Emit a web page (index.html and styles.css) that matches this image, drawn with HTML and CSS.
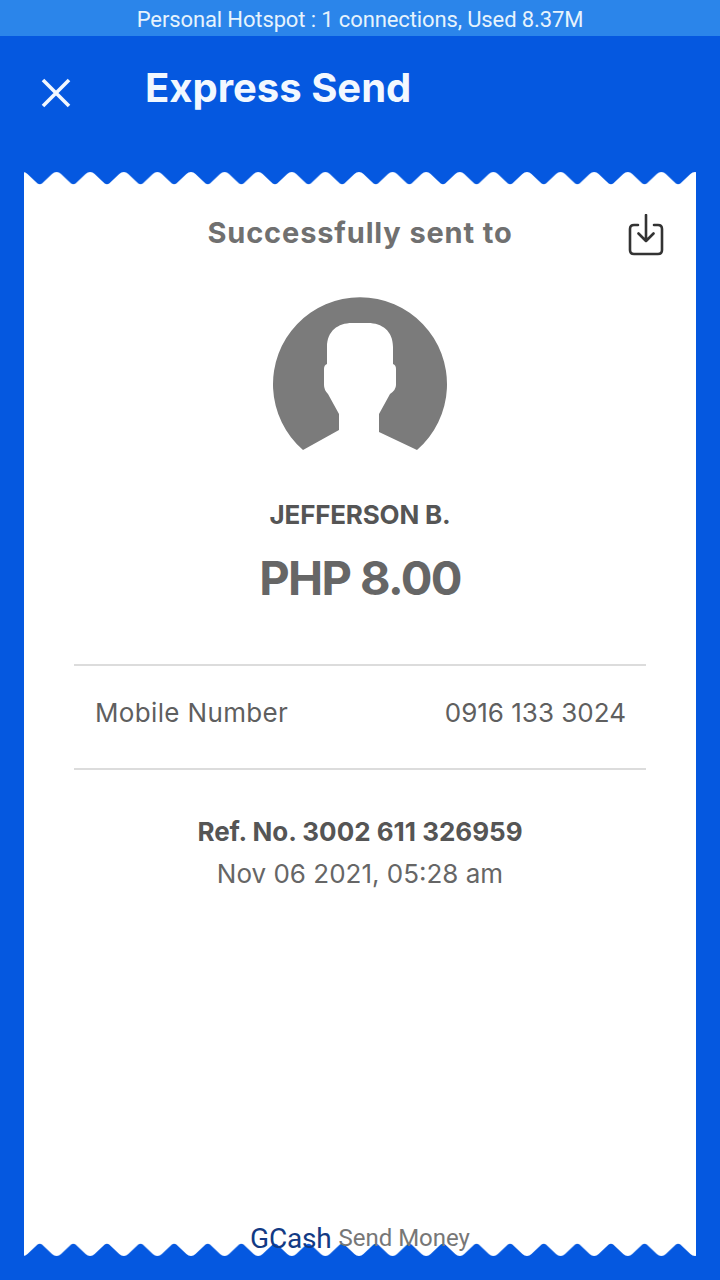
FILE: index.html
```html
<!DOCTYPE html>
<html lang="en">
<head>
  <meta charset="UTF-8">
  <meta name="viewport" content="width=device-width, initial-scale=1.0">
  <title>Express Send</title>
  <link rel="stylesheet" href="styles.css">
</head>
<body>

<div class="hotspot">Personal Hotspot : 1 connections, Used 8.37M</div>

<header class="topbar">
  <svg class="close-icon" width="30" height="30" viewBox="0 0 30 30">
    <path d="M2 2 L28 28 M28 2 L2 28"/>
  </svg>
  <h1 class="title">Express Send</h1>
</header>

<main class="receipt">
  <svg class="edge" width="672" height="13">
    <defs>
      <pattern id="waveTop" patternUnits="userSpaceOnUse" x="-1" width="33.6" height="13">
        <path d="M0 0 Q2.5 0 4.5 2 L14.5 11.5 Q16.8 13 19 11.5 L29 2 Q31 0 33.6 0 V13 H0 Z" fill="#fff"/>
      </pattern>
    </defs>
    <rect width="672" height="13" fill="url(#waveTop)"/>
  </svg>

  <div class="receipt-body">
    <div class="receipt-head">
      <h2 class="sent-to">Successfully sent to</h2>
      <svg class="save-icon" width="36" height="42" viewBox="0 0 36 42">
        <path d="M10 11 H6 Q2 11 2 15 V36 Q2 40 6 40 H30 Q34 40 34 36 V15 Q34 11 30 11 H26"/>
        <path d="M18 1 V27 M10.5 19.5 L18 27 L25.5 19.5"/>
      </svg>
    </div>

    <svg class="avatar" width="176" height="160" viewBox="0 0 176 160">
      <path d="M31 153 A87 87 0 1 1 145 153 L107 135 V117 L118 97 Q124 93 124 88 V72 Q124 68 121 67 V50 C121 34 110 26 96 26 H80 C66 26 55 34 55 50 V67 Q52 68 52 72 V88 Q52 93 56 97 L67 117 V133 Z"/>
    </svg>

    <p class="name">JEFFERSON B.</p>
    <p class="amount">PHP 8.00</p>

    <div class="detail-row">
      <span class="detail-label">Mobile Number</span>
      <span class="detail-value">0916 133 3024</span>
    </div>

    <p class="ref">Ref. No. 3002 611 326959</p>
    <p class="date">Nov 06 2021, 05:28 am</p>
  </div>

  <svg class="edge" width="672" height="13">
    <defs>
      <pattern id="waveBottom" patternUnits="userSpaceOnUse" x="-1" width="33.6" height="13">
        <path d="M0 0 H33.6 V13 Q31 13 29 11 L19 1.5 Q16.8 0 14.5 1.5 L4.5 11 Q2.5 13 0 13 Z" fill="#fff"/>
      </pattern>
    </defs>
    <rect width="672" height="13" fill="url(#waveBottom)"/>
  </svg>

  <div class="brand"><span class="brand-name">GCash</span> <span class="brand-sub">Send Money</span></div>
</main>

</body>
</html>
```

FILE: styles.css
```css
* { box-sizing: border-box; }

body {
  margin: 0;
  width: 720px;
  height: 1280px;
  background-color: #0558e0;
  font-family: Inter, "Noto Sans", sans-serif;
  display: flex;
  flex-direction: column;
  overflow: hidden;
}

p, h1, h2 { margin: 0; }

.hotspot {
  height: 36px;
  line-height: 39px;
  background-color: #2b85ea;
  color: #e6f3fd;
  font-family: Roboto, sans-serif;
  font-size: 22px;
  letter-spacing: -0.12px;
  text-align: center;
}

.topbar {
  height: 136px;
  padding: 15px 0 0 41px;
  display: flex;
  align-items: flex-start;
}
.close-icon { margin-top: 27px; }
.close-icon path { stroke: #f2f8ff; stroke-width: 3.6; fill: none; }
.title {
  margin: 14px 0 0 74px;
  font-size: 40px;
  line-height: 46px;
  font-weight: 700;
  color: #f2f8ff;
}

.receipt {
  position: relative;
  width: 672px;
  margin-left: 24px;
  height: 1084px;
  display: flex;
  flex-direction: column;
}
.edge { display: block; flex: none; }

.receipt-body {
  flex: 1;
  background-color: #fff;
  padding: 0 50px;
  text-align: center;
}

.receipt-head {
  height: 79px;
  margin: 0 -18px 0 0;
  padding-top: 27px;
  display: grid;
  grid-template-columns: 1fr auto 1fr;
  align-items: start;
}
.sent-to {
  grid-column: 2;
  margin-left: -18px;
  font-size: 29px;
  line-height: 42px;
  font-weight: 700;
  letter-spacing: 0.85px;
  color: #707070;
}
.save-icon { grid-column: 3; justify-self: end; margin-top: 2px; }
.save-icon path { fill: none; stroke: #333; stroke-width: 2.6; stroke-linecap: round; stroke-linejoin: round; }

.avatar { display: block; margin: 33px auto 0; }
.avatar path { fill: #7b7b7b; }

.name {
  margin-top: 40px;
  font-size: 26px;
  line-height: 36px;
  font-weight: 700;
  letter-spacing: -0.2px;
  color: #555;
}
.amount {
  margin-top: 15px;
  font-size: 47px;
  line-height: 60px;
  font-weight: 700;
  letter-spacing: -1.6px;
  color: #666;
}

.detail-row {
  margin-top: 56px;
  height: 106px;
  padding: 0 20px 10px 21px;
  border-top: 2px solid #dcdcdc;
  border-bottom: 2px solid #dcdcdc;
  display: flex;
  justify-content: space-between;
  align-items: center;
  font-size: 26px;
  color: #5f5f5f;
}
.detail-label { letter-spacing: 0.35px; }

.ref {
  margin-top: 44px;
  font-size: 26px;
  line-height: 36px;
  font-weight: 700;
  color: #555;
}
.date {
  margin-top: 6px;
  font-size: 26px;
  line-height: 36px;
  color: #666;
}

.brand {
  position: absolute;
  left: 0;
  right: 0;
  top: 1046px;
  text-align: center;
  font-family: Roboto, sans-serif;
  line-height: 40px;
}
.brand-name { font-size: 28px; letter-spacing: -0.2px; color: #123a84; }
.brand-sub { margin-left: 3px; font-size: 24px; color: #777; vertical-align: 2px; }
```
